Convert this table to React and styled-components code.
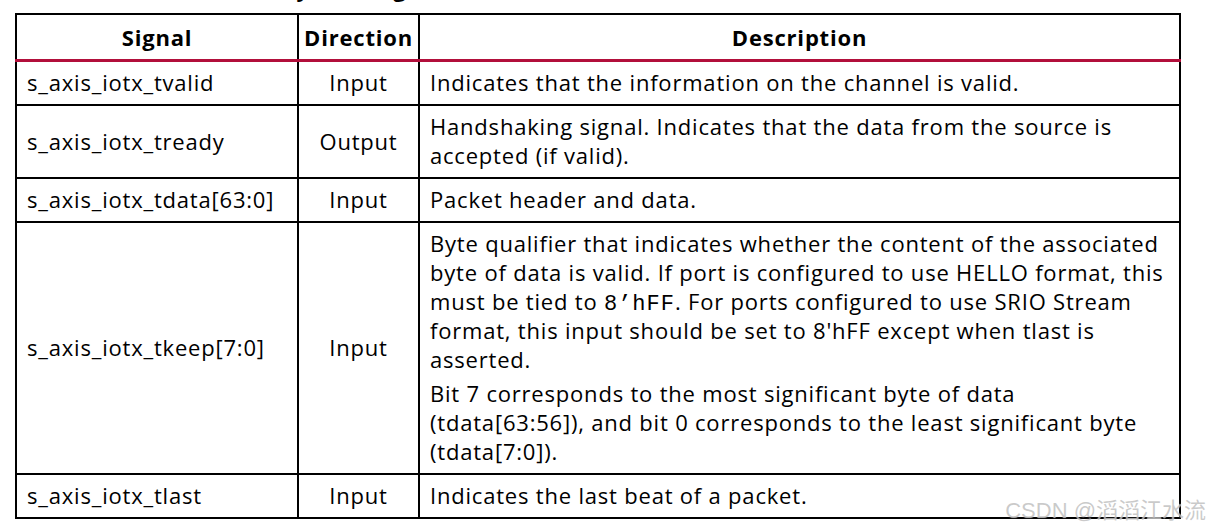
import styled, { createGlobalStyle } from "styled-components";

const GlobalStyle = createGlobalStyle`
  html, body {
    margin: 0;
    padding: 0;
    background: #fff;
  }
  body {
    font-family: "Open Sans", "Noto Sans", sans-serif;
    color: #000;
  }
`;

const rows = [
  { signal: "s_axis_iotx_tvalid", dir: "Input", desc: [[["Indicates that the information on the channel is valid."]]] },
  {
    signal: "s_axis_iotx_tready",
    dir: "Output",
    desc: [[["Handshaking signal. Indicates that the data from the source is"], ["accepted (if valid)."]]],
  },
  { signal: "s_axis_iotx_tdata[63:0]", dir: "Input", desc: [[["Packet header and data."]]] },
  {
    signal: "s_axis_iotx_tkeep[7:0]",
    dir: "Input",
    desc: [
      [
        ["Byte qualifier that indicates whether the content of the associated"],
        ["byte of data is valid. If port is configured to use HELLO format, this"],
        ["must be tied to ", { code: "8\u2019hFF" }, ". For ports configured to use SRIO Stream"],
        ["format, this input should be set to 8'hFF except when tlast is"],
        ["asserted."],
      ],
      [
        ["Bit 7 corresponds to the most significant byte of data"],
        ["(tdata[63:56]), and bit 0 corresponds to the least significant byte"],
        ["(tdata[7:0])."],
      ],
    ],
  },
  { signal: "s_axis_iotx_tlast", dir: "Input", desc: [[["Indicates the last beat of a packet."]]] },
];

const App = () => {
  return (
    <Page>
      <GlobalStyle />
      <Caption>
        <CaptionText>Table 3-7: I/O Primary Port Signals</CaptionText>
      </Caption>
      <Table>
        <colgroup>
          <col style={{ width: 282 }} />
          <col style={{ width: 121 }} />
          <col />
        </colgroup>
        <thead>
          <tr>
            <Head>Signal</Head>
            <Head>Direction</Head>
            <Head>Description</Head>
          </tr>
        </thead>
        <tbody>
          {rows.map((r) => (
            <tr key={r.signal}>
              <Cell>{r.signal}</Cell>
              <Cell $center>{r.dir}</Cell>
              <Cell>
                {r.desc.map((p, i) => (
                  <Para key={i}>
                    {p.map((line, k) => (
                      <Line key={k}>
                        {line.map((part, j) =>
                          typeof part === "string" ? part : <Code key={j}>{part.code}</Code>
                        )}
                      </Line>
                    ))}
                  </Para>
                ))}
              </Cell>
            </tr>
          ))}
        </tbody>
      </Table>
      <Watermark>CSDN @滔滔江水流</Watermark>
    </Page>
  );
};

const Page = styled.div`
  position: relative;
  width: 1210px;
  height: 529px;
  overflow: hidden;
  padding: 0 0 0 15px;
  box-sizing: border-box;
`;

const Caption = styled.div`
  height: 13px;
  overflow: hidden;
  position: relative;
`;

const CaptionText = styled.div`
  position: absolute;
  left: 40px;
  bottom: 10px;
  font-size: 22px;
  font-weight: 700;
  letter-spacing: 0.8px;
  line-height: 30px;
  white-space: nowrap;
`;

const Table = styled.table`
  width: 1166px;
  table-layout: fixed;
  border-collapse: collapse;
  border: 2px solid #000;
  font-size: 22px;
  letter-spacing: 0.8px;
  line-height: 29px;
`;

const Head = styled.th`
  border: 2px solid #000;
  border-bottom: 3px solid #b20f3b;
  font-weight: 700;
  text-align: center;
  height: 44px;
  padding: 0 2px;
  vertical-align: middle;
  white-space: nowrap;
`;

const Cell = styled.td`
  border: 2px solid #000;
  padding: 6px 10px 7px 10px;
  text-align: ${(p) => (p.$center ? "center" : "left")};
  vertical-align: middle;
  font-weight: 400;
  white-space: nowrap;
`;

const Para = styled.div`
  & + & {
    margin-top: 5px;
  }
`;

const Line = styled.div`
  height: 29px;
`;

const Code = styled.span`
  font-family: "Liberation Mono", "DejaVu Sans Mono", monospace;
  font-size: 22px;
  letter-spacing: 1px;
  line-height: 1;
`;

const Watermark = styled.div`
  position: absolute;
  right: 4px;
  bottom: 5px;
  font-family: "Liberation Sans", "Noto Sans CJK SC", sans-serif;
  font-size: 22px;
  color: rgba(150, 150, 150, 0.5);
  text-shadow: 0 0 1px rgba(255, 255, 255, 0.8);
  white-space: nowrap;
`;

export default App;
